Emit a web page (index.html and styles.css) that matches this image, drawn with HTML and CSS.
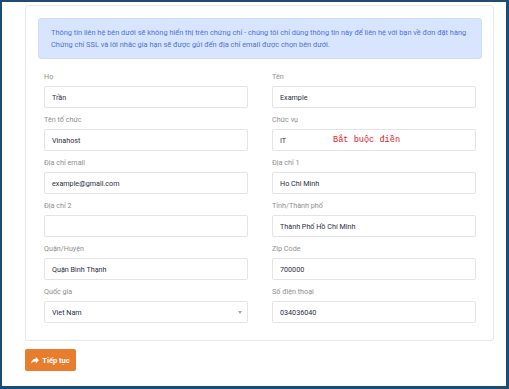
FILE: index.html
```html
<!DOCTYPE html>
<html lang="vi">
<head>
    <meta charset="UTF-8">
    <meta name="viewport" content="width=device-width, initial-scale=1.0">
    <title>Thông tin liên hệ</title>
    <link rel="stylesheet" href="styles.css">
</head>
<body>
    <div class="frame">
        <div class="card">
            <div class="alert">
                Thông tin liên hệ bên dưới sẽ không hiển thị trên chứng chỉ - chúng tôi chỉ dùng thông tin này để liên hệ với bạn về đơn đặt hàng<br>
                Chứng chỉ SSL và lời nhắc gia hạn sẽ được gửi đến địa chỉ email được chọn bên dưới.
            </div>
            <div class="form-grid">
                <div class="field">
                    <label>Họ</label>
                    <input class="control" type="text" value="Trần">
                </div>
                <div class="field">
                    <label>Tên</label>
                    <input class="control" type="text" value="Example">
                </div>
                <div class="field">
                    <label>Tên tổ chức</label>
                    <input class="control" type="text" value="Vinahost">
                </div>
                <div class="field">
                    <label>Chức vụ</label>
                    <div class="control-wrap">
                        <input class="control" type="text" value="IT">
                        <span class="required-note">Bắt buộc điền</span>
                    </div>
                </div>
                <div class="field">
                    <label>Địa chỉ email</label>
                    <input class="control" type="text" value="example@gmail.com">
                </div>
                <div class="field">
                    <label>Địa chỉ 1</label>
                    <input class="control" type="text" value="Ho Chi Minh">
                </div>
                <div class="field">
                    <label>Địa chỉ 2</label>
                    <input class="control" type="text" value="">
                </div>
                <div class="field">
                    <label>Tỉnh/Thành phố</label>
                    <input class="control" type="text" value="Thành Phố Hồ Chí Minh">
                </div>
                <div class="field">
                    <label>Quận/Huyện</label>
                    <input class="control" type="text" value="Quận Bình Thạnh">
                </div>
                <div class="field">
                    <label>Zip Code</label>
                    <input class="control" type="text" value="700000">
                </div>
                <div class="field">
                    <label>Quốc gia</label>
                    <div class="select-wrap">
                        <select class="control">
                            <option>Viet Nam</option>
                        </select>
                    </div>
                </div>
                <div class="field">
                    <label>Số điện thoại</label>
                    <input class="control" type="text" value="034036040">
                </div>
            </div>
        </div>
        <button class="btn-next">
            <svg width="8" height="7" viewBox="0 0 8 7"><path d="M8 3.2 4.8 0v1.8C2 1.9.4 3.6 0 6.6 1 5.2 2.6 4.5 4.8 4.5v1.9z" fill="#fff"/></svg>
            Tiếp tục
        </button>
    </div>
</body>
</html>
```

FILE: styles.css
```css
* {
    box-sizing: border-box;
}
html, body {
    margin: 0;
    background: #fff;
}
body {
    font-family: Roboto, 'Liberation Sans', Arial, sans-serif;
    font-size: 8px;
    color: #333;
}
.frame {
    width: 509px;
    height: 389px;
    border-style: solid;
    border-color: #1d4c72;
    border-width: 2px 3px 3px 2px;
    padding: 3px 12px 0 23px;
}
.card {
    border: 1px solid #e8e8ea;
    border-radius: 3px;
    padding: 12px 11px 11px 12px;
}
.alert {
    background: #d8e5fe;
    border: 1px solid #cddcfb;
    border-radius: 3px;
    color: #4d74d6;
    font-size: 7.4px;
    line-height: 12px;
    padding: 8px 12px 8px 12px;
    height: 41px;
}
.form-grid {
    display: grid;
    grid-template-columns: 1fr 1fr;
    column-gap: 24px;
    padding: 12px 6px 0 6px;
}
.field {
    display: flex;
    flex-direction: column;
    margin-bottom: 6px;
}
.field label {
    color: #8f8f8f;
    font-size: 7.2px;
    line-height: 12px;
    margin-bottom: 3px;
}
.control {
    width: 100%;
    height: 22px;
    border: 1px solid #e4e4e6;
    border-radius: 2px;
    background: #fff;
    padding: 0 7px;
    font-family: Roboto, 'Liberation Sans', Arial, sans-serif;
    font-size: 7.2px;
    color: #2a2e3e;
    outline: none;
}
.control-wrap, .select-wrap {
    position: relative;
}
.required-note {
    position: absolute;
    left: 61px;
    top: 5px;
    color: #e8212b;
    font-family: 'Liberation Mono', 'DejaVu Sans Mono', monospace;
    font-size: 8.6px;
    line-height: 12px;
}
select.control {
    appearance: none;
    -webkit-appearance: none;
}
.select-wrap::after {
    content: '';
    position: absolute;
    right: 6px;
    top: 10px;
    border-left: 2px solid transparent;
    border-right: 2px solid transparent;
    border-top: 3px solid #a3a3b3;
}
.btn-next {
    margin-top: 8px;
    width: 51px;
    height: 22px;
    background: #e97d2e;
    border: none;
    border-radius: 2px;
    color: #fff;
    font-family: Roboto, 'Liberation Sans', Arial, sans-serif;
    font-size: 7.5px;
    font-weight: bold;
    display: flex;
    align-items: center;
    justify-content: center;
    gap: 3px;
    padding: 0;
}
```
